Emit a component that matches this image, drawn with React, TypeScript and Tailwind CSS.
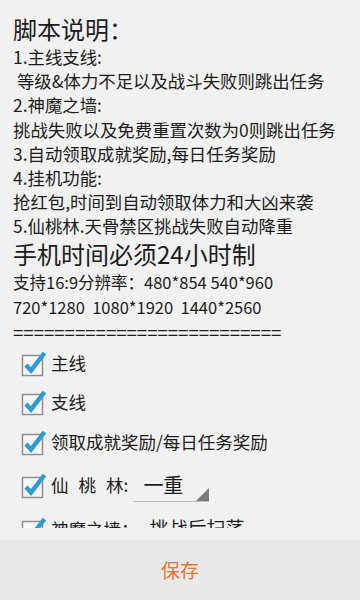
import React from "react";

const font = { fontFamily: '"Noto Sans CJK SC", "Noto Sans", sans-serif' };

function CheckBox() {
    return (
        <svg width="28" height="28" viewBox="0 0 28 28" className="shrink-0">
            <rect x="2.5" y="6.5" width="20" height="20" fill="#f7f7f7" stroke="#8f8f8f" strokeWidth="1.5" />
            <path d="M6 16l5 5.5L24.5 4" fill="none" stroke="#2f9bd6" strokeWidth="4.5" strokeLinejoin="miter" />
        </svg>
    );
}

const notes = [
    "1.主线支线:",
    " 等级&体力不足以及战斗失败则跳出任务",
    "2.神魔之墙:",
    "挑战失败以及免费重置次数为0则跳出任务",
    "3.自动领取成就奖励,每日任务奖励",
    "4.挂机功能:",
    "抢红包,时间到自动领取体力和大凶来袭",
    "5.仙桃林.天骨禁区挑战失败自动降重",
];

export default function App() {
    return (
        <div className="w-[360px] h-[600px] flex flex-col bg-[#f1f1f1] text-[#1c1c1c]" style={font}>
            <div className="h-[528px] overflow-hidden px-[13px] pt-[13px]">
                <div className="text-[24px] leading-[32px]">脚本说明：</div>
                <div className="text-[17.4px] leading-[24.2px] whitespace-pre">
                    {notes.map((n) => (
                        <div key={n}>{n}</div>
                    ))}
                </div>
                <div className="text-[24px] leading-[28px] mt-[1px]">手机时间必须24小时制</div>
                <div className="text-[16.5px] leading-[25px] mt-[2px]">支持16:9分辨率：480*854 540*960</div>
                <div className="text-[16.5px] leading-[25px] whitespace-pre">720*1280  1080*1920  1440*2560</div>
                <div className="text-[18.6px] leading-[23px] whitespace-pre">==========================</div>

                <div className="flex flex-col pl-[7px]">
                    <div className="flex items-center h-[40px] gap-[3px]">
                        <CheckBox />
                        <span className="text-[17.5px]">主线</span>
                    </div>
                    <div className="flex items-center h-[39px] gap-[3px]">
                        <CheckBox />
                        <span className="text-[17.5px]">支线</span>
                    </div>
                    <div className="flex items-center h-[40px] gap-[3px]">
                        <CheckBox />
                        <span className="text-[17.5px]">领取成就奖励/每日任务奖励</span>
                    </div>
                    <div className="flex items-center h-[47px] gap-[3px]">
                        <CheckBox />
                        <span className="text-[17.5px]">
                            <span className="tracking-[10px]">仙桃</span>林:
                        </span>
                        <div className="relative ml-[2px] w-[76px] h-[34px] border-b border-[#bdbdbd] flex items-center pl-[10px]">
                            <span className="text-[20px]">一重</span>
                            <span className="absolute right-0 bottom-0 w-0 h-0 border-l-[13px] border-l-transparent border-b-[13px] border-b-[#7a7a7a]" />
                        </div>
                    </div>
                    <div className="flex items-center h-[40px] gap-[3px]">
                        <CheckBox />
                        <span className="text-[17.5px]">神魔之墙：</span>
                        <span className="text-[19px] ml-[8px]">挑战后扫荡</span>
                    </div>
                </div>
            </div>
            <div className="h-[12px]" />
            <div className="flex-1 bg-[#e9e9e9] flex items-center justify-center">
                <span className="text-[19px] text-[#ec7430]">保存</span>
            </div>
        </div>
    );
}
